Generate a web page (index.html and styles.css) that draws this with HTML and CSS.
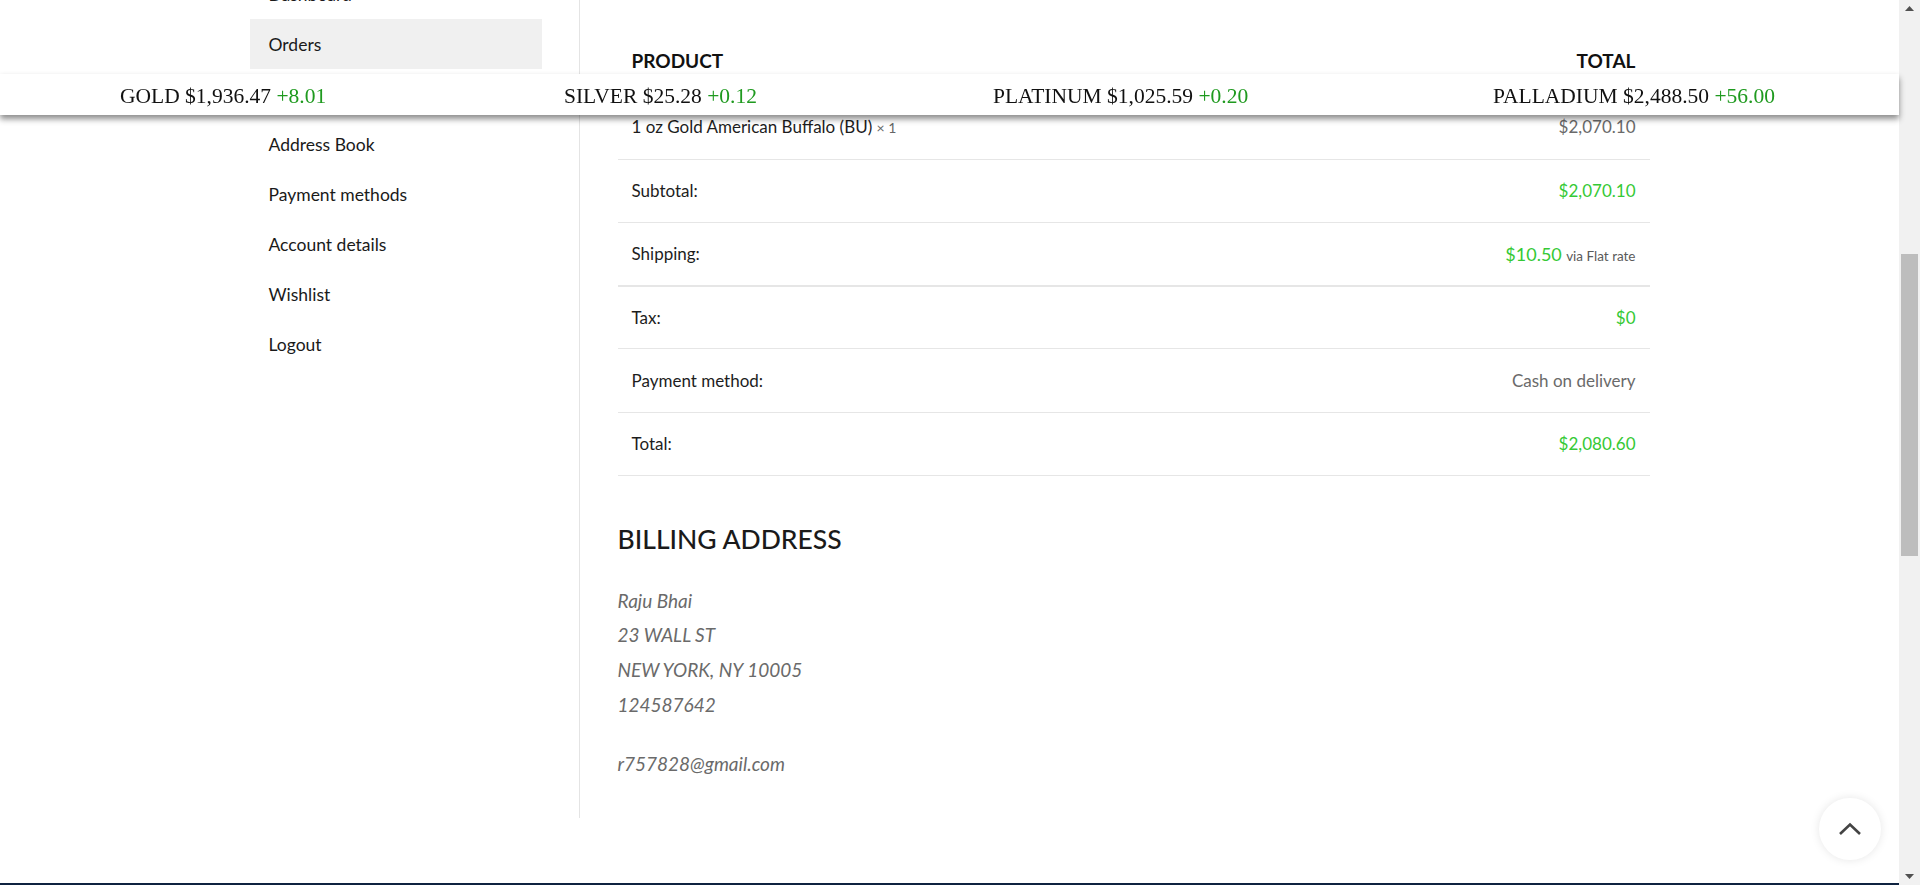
FILE: index.html
```html
<!DOCTYPE html>
<html lang="en">
<head>
<meta charset="utf-8">
<title>My account – Orders</title>
<link rel="stylesheet" href="styles.css">
</head>
<body>
<div class="viewport">
  <div class="page">
    <div class="account">
      <nav class="account-nav">
        <ul>
          <li><a href="#">Dashboard</a></li>
          <li class="is-active"><a href="#">Orders</a></li>
          <li><a href="#">Downloads</a></li>
          <li><a href="#">Address Book</a></li>
          <li><a href="#">Payment methods</a></li>
          <li><a href="#">Account details</a></li>
          <li><a href="#">Wishlist</a></li>
          <li><a href="#">Logout</a></li>
        </ul>
      </nav>
      <div class="account-content">
        <table class="order-table">
          <thead>
            <tr class="head-row"><th class="col-name">Product</th><th class="col-total">Total</th></tr>
          </thead>
          <tbody>
            <tr class="item-row">
              <td class="col-name">1 oz Gold American Buffalo (BU) <span class="qty">× 1</span></td>
              <td class="col-total muted">$2,070.10</td>
            </tr>
          </tbody>
          <tfoot>
            <tr><th class="col-name">Subtotal:</th><td class="col-total price">$2,070.10</td></tr>
            <tr class="row-strong"><th class="col-name">Shipping:</th><td class="col-total"><span class="price price-lg">$10.50</span> <small class="via">via Flat rate</small></td></tr>
            <tr><th class="col-name">Tax:</th><td class="col-total price">$0</td></tr>
            <tr><th class="col-name">Payment method:</th><td class="col-total muted">Cash on delivery</td></tr>
            <tr><th class="col-name">Total:</th><td class="col-total price">$2,080.60</td></tr>
          </tfoot>
        </table>
        <section class="customer-details">
          <h2>Billing address</h2>
          <address>
            Raju Bhai<br>
            23 WALL ST<br>
            NEW YORK, NY 10005<br>
            124587642
            <span class="email">r757828@gmail.com</span>
          </address>
        </section>
      </div>
    </div>
  </div>
  <footer class="site-footer"></footer>
</div>
<div class="scrollbar">
  <div class="sb-btn"><svg width="9" height="5" viewBox="0 0 9 5"><path d="M0 5 L4.5 0 L9 5 Z" fill="#505050"/></svg></div>
  <div class="sb-track"><div class="sb-thumb"></div></div>
  <div class="sb-btn"><svg width="9" height="5" viewBox="0 0 9 5"><path d="M0 0 L4.5 5 L9 0 Z" fill="#505050"/></svg></div>
</div>
<div class="ticker">
  <div class="ticker-item">GOLD $1,936.47 <span class="up">+8.01</span></div>
  <div class="ticker-item">SILVER $25.28 <span class="up">+0.12</span></div>
  <div class="ticker-item">PLATINUM $1,025.59 <span class="up">+0.20</span></div>
  <div class="ticker-item">PALLADIUM $2,488.50 <span class="up">+56.00</span></div>
</div>
<a class="to-top" href="#"><svg width="26" height="16" viewBox="0 0 26 16"><path d="M3 13 L13 3.5 L23 13" fill="none" stroke="#444" stroke-width="2.6"/></svg></a>
</body>
</html>
```

FILE: styles.css
```css
* { box-sizing: border-box; }
html, body { margin: 0; padding: 0; height: 885px; overflow: hidden; }
body {
  display: flex;
  font-family: Lato, "Noto Sans", sans-serif;
  color: #1d1d1d;
  background: #fff;
}
.viewport {
  flex: 1;
  height: 885px;
  overflow: hidden;
  display: flex;
  flex-direction: column;
}
.page { height: 883px; flex-shrink: 0; }
.site-footer { height: 60px; flex-shrink: 0; background: #0f2340; }

.account {
  width: 1400px;
  margin: 0 auto;
  display: grid;
  grid-template-columns: 329px 1fr;
}
.account-nav ul {
  list-style: none;
  margin: -31px 0 0;
  padding: 0;
  width: 292px;
}
.account-nav a {
  display: flex;
  align-items: center;
  height: 50px;
  padding-left: 19px;
  font-size: 17.5px;
  color: #1a1a1a;
  text-decoration: none;
}
.account-nav .is-active a { background: #f0f0f0; }

.account-content {
  border-left: 1px solid #e4e4e4;
  padding: 28px 0 0 38px;
  height: 818px;
}

.order-table { width: 100%; border-collapse: collapse; }
.order-table th,
.order-table td {
  height: 63.3px;
  padding: 0 14px;
  border-bottom: 1px solid #e6e6e6;
  vertical-align: middle;
  font-size: 17px;
  font-weight: 400;
  color: #1d1d1d;
}
.order-table .head-row th { height: 66px; }
.order-table .item-row td { height: 65px; }
.order-table thead th {
  font-size: 19px;
  font-weight: 700;
  text-transform: uppercase;
  color: #111;
}
.order-table .col-name { text-align: left; }
.order-table .col-total { text-align: right; }
.order-table .row-strong th,
.order-table .row-strong td { border-bottom-width: 2px; }
.order-table .muted { color: #6a6a6a; }
.order-table .price { color: #35c935; }
.price-lg { font-size: 18px; }
.qty { font-size: 14px; color: #666; }
.via { font-size: 13.5px; color: #5a5a5a; }

.customer-details h2 {
  margin: 48px 0 28px;
  font-size: 26.5px;
  line-height: 1.2;
  font-weight: 500;
  text-transform: uppercase;
  color: #1a1a1a;
}
.customer-details address {
  font-size: 19px;
  line-height: 34.7px;
  color: #6a6a6a;
  font-style: italic;
}
.customer-details .email { display: block; margin-top: 24px; }

.scrollbar {
  width: 21px;
  height: 885px;
  flex-shrink: 0;
  background: #f1f1f1;
  display: flex;
  flex-direction: column;
}
.sb-btn {
  height: 17px;
  display: flex;
  align-items: center;
  justify-content: center;
  flex-shrink: 0;
}
.sb-track { flex: 1; }
.sb-thumb {
  margin: 237px 2px 0;
  height: 302px;
  background: #bdbdbd;
}

.ticker {
  position: fixed;
  top: 74px;
  left: 0;
  right: 21px;
  height: 41px;
  padding-top: 3px;
  background: #fff;
  box-shadow: 0 4px 6px rgba(0, 0, 0, 0.45);
  display: grid;
  grid-template-columns: 444px 429px 500px auto;
  align-items: center;
  padding-left: 120px;
  font-family: "Liberation Serif", "Times New Roman", serif;
  font-size: 21.5px;
  color: #111;
  white-space: nowrap;
}
.ticker .up { color: #1f9a1f; }

.to-top {
  position: fixed;
  right: 39px;
  bottom: 25px;
  width: 62px;
  height: 62px;
  border-radius: 50%;
  background: #fff;
  box-shadow: 0 0 10px rgba(0, 0, 0, 0.1);
  display: flex;
  align-items: center;
  justify-content: center;
}
```
